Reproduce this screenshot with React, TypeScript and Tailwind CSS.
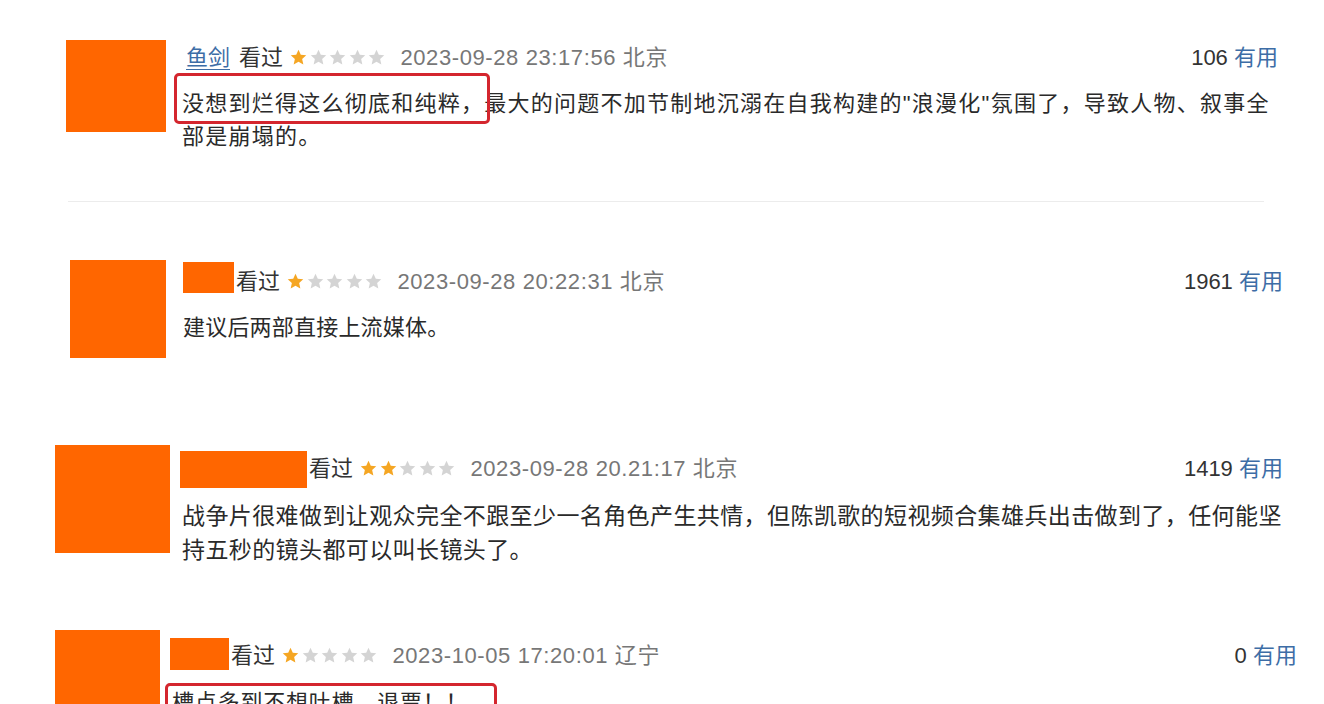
import React from 'react';

const Star = ({ on }: { on: boolean }) => (
  <svg width="19" height="19" viewBox="0 0 24 24" className="shrink-0">
    <path
      d="M12 2.2l2.9 6.4 6.9.7-5.2 4.7 1.5 6.9L12 17.3l-6.1 3.6 1.5-6.9-5.2-4.7 6.9-.7z"
      fill={on ? '#f5a623' : '#d4d4d4'}
    />
  </svg>
);

const Stars = ({ count }: { count: number }) => (
  <div className="flex items-center gap-[0.6px] ml-[6px]">
    {[0, 1, 2, 3, 4].map((i) => (
      <Star key={i} on={i < count} />
    ))}
  </div>
);

interface HeaderProps {
  name: React.ReactNode;
  stars: number;
  time: string;
  votes: string;
}

const Header: React.FC<HeaderProps> = ({ name, stars, time, votes }) => (
  <div className="flex items-center h-[34px] text-[22px]">
    {name}
    <span className="ml-[2px] text-[#333]">看过</span>
    <Stars count={stars} />
    <span className="ml-[14px] text-[#777] tracking-[0.6px]">{time}</span>
    <span className="ml-auto text-[#333]">
      {votes} <span className="text-[#3d6da6]">有用</span>
    </span>
  </div>
);

const Mark: React.FC<{ children: React.ReactNode; box: string }> = ({ children, box }) => (
  <span className="relative inline-block">
    {children}
    <span className={`absolute border-[3px] border-[#d4262e] rounded-[5px] ${box}`} />
  </span>
);

export default function App() {
  return (
    <div className="w-[1324px] h-[704px] overflow-hidden bg-white font-['Liberation_Sans','Noto_Sans_CJK_SC',sans-serif] text-[#333]">
      {/* comment 1 */}
      <div className="flex items-start pt-[40px]">
        <div className="ml-[66px] w-[100px] h-[92px] bg-[#ff6600] shrink-0" />
        <div className="ml-[16px] w-[1096px]">
          <Header
            name={<span className="ml-[4px] mr-[7px] text-[#3d6da6] underline underline-offset-4 decoration-1">鱼剑</span>}
            stars={1}
            time="2023-09-28 23:17:56 北京"
            votes="106"
          />
          <div className="mt-[13px] text-[22px] leading-[33px] tracking-[1.25px] text-[#2a2a2a] whitespace-nowrap">
            <Mark box="-left-[8px] -top-[14px] -right-[6px] -bottom-[4px]">没想到烂得这么彻底和纯粹，</Mark>
            最大的问题不加节制地沉溺在自我构建的"浪漫化"氛围了，导致人物、叙事全
            <br />
            部是崩塌的。
          </div>
        </div>
      </div>

      <div className="mt-[48px] ml-[68px] w-[1196px] h-px bg-[#ececec]" />

      {/* comment 2 */}
      <div className="flex items-start mt-[58px]">
        <div className="ml-[70px] w-[96px] h-[98px] bg-[#ff6600] shrink-0" />
        <div className="ml-[17px] w-[1100px] mt-[4px]">
          <Header
            name={<span className="w-[51px] h-[31px] bg-[#ff6600] -mt-[7px] shrink-0" />}
            stars={1}
            time="2023-09-28 20:22:31 北京"
            votes="1961"
          />
          <div className="mt-[13px] text-[22px] leading-[33px] tracking-[0.2px] text-[#2a2a2a]">建议后两部直接上流媒体。</div>
        </div>
      </div>

      {/* comment 3 */}
      <div className="flex items-start mt-[87px]">
        <div className="ml-[55px] w-[115px] h-[108px] bg-[#ff6600] shrink-0" />
        <div className="ml-[10px] w-[1103px] mt-[6px]">
          <Header
            name={<span className="w-[127px] h-[37px] bg-[#ff6600] mt-[3px] shrink-0" />}
            stars={2}
            time="2023-09-28 20.21:17 北京"
            votes="1419"
          />
          <div className="mt-[14px] pl-[2px] text-[23px] leading-[34px] tracking-[0.4px] text-[#2a2a2a] whitespace-nowrap">
            战争片很难做到让观众完全不跟至少一名角色产生共情，但陈凯歌的短视频合集雄兵出击做到了，任何能坚
            <br />
            持五秒的镜头都可以叫长镜头了。
          </div>
        </div>
      </div>

      {/* comment 4 */}
      <div className="flex items-start mt-[63px]">
        <div className="ml-[55px] w-[105px] h-[90px] bg-[#ff6600] shrink-0" />
        <div className="ml-[10px] w-[1127px] mt-[8px]">
          <Header
            name={<span className="w-[59px] h-[32px] bg-[#ff6600] -mt-[2px] shrink-0" />}
            stars={1}
            time="2023-10-05 17:20:01 辽宁"
            votes="0"
          />
          <div className="mt-[14px] pl-[2px] text-[22px] leading-[34px] tracking-[0.8px] text-[#2a2a2a] whitespace-nowrap">
            <Mark box="-left-[7px] -top-[3px] -right-[29px] h-[60px]">槽点多到不想吐槽，退票！！</Mark>
          </div>
        </div>
      </div>
    </div>
  );
}
